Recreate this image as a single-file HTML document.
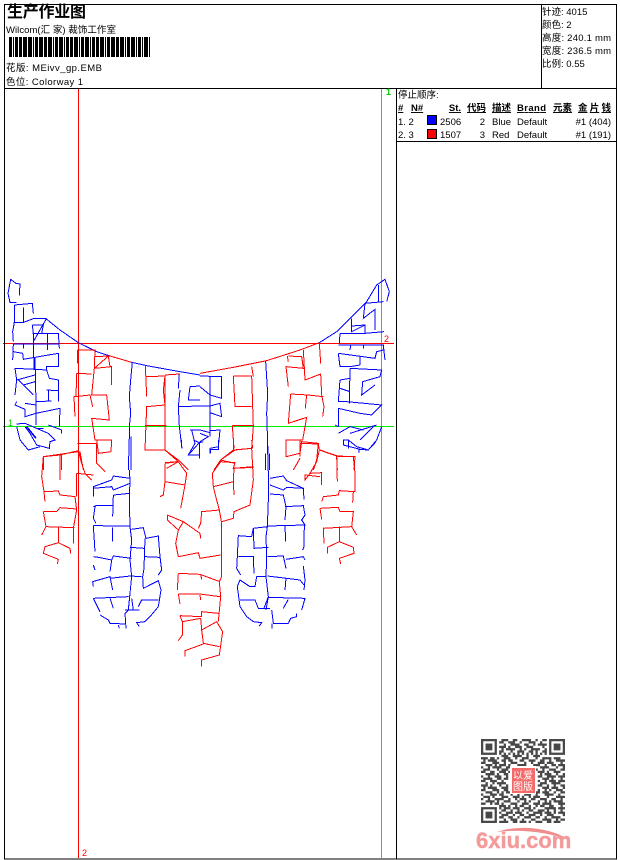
<!DOCTYPE html>
<html><head><meta charset="utf-8"><style>
html,body{margin:0;padding:0;background:#fff;width:620px;height:860px;overflow:hidden}
svg{display:block}
text{font-family:"Liberation Sans","Noto Sans CJK SC",sans-serif;font-size:9.5px;fill:#000}
.s path{fill:none;stroke-width:3;stroke-linejoin:miter}
.b{stroke:#0000ff}.r{stroke:#ff0000}
.h{font-weight:bold;text-decoration:underline}
</style></head><body>
<svg width="620" height="860" viewBox="0 0 620 860" xmlns="http://www.w3.org/2000/svg">
<rect width="620" height="860" fill="#fff"/>
<g shape-rendering="crispEdges">
<path d="M78.5 88V858" stroke="#f00" fill="none"/>
<path d="M381.5 88V858" stroke="#00ee00" fill="none"/>
<path d="M3 343.5H394" stroke="#f00" fill="none"/>
<path d="M3 426.5H394" stroke="#00ee00" fill="none"/>

<g class="s" transform="translate(0,270) scale(.33333)">
<path class="b" d="M32,28 24,70 30,97 50,97M32,28 48,40 60,42 58,76M43,105 97,100 100,130M43,105 43,158 38,185 40,215M70,112 70,158M40,158 68,158 100,146 138,146 180,180 235,218 290,245 330,258 395,277 440,287 540,305 600,315M97,165 130,165 125,190M138,148 100,215M97,165 100,190M97,190 175,190 178,235M143,190 143,240M100,190 102,300M40,222 178,222M40,222 38,270M70,222 70,235M40,245 68,250 70,268 105,262 145,255 175,250 175,290 140,290 140,300 105,298 45,295 50,330 45,375M105,262 108,400 108,465M50,330 105,315M55,330 100,375M70,345 105,335M140,300 148,325 175,330 175,395M140,360 175,362M145,362 145,395M108,395 155,393M50,395 45,405 75,418 75,440 108,430 180,415 178,470M75,400 108,405M50,462 75,460 110,475 145,490 165,510 150,515 148,535 110,525 90,490 75,470M50,470 60,510 85,540 120,530M145,465 185,480 185,490M110,475 130,475M397,277 392,330 388,380 392,430 388,470 388,500 385,600M393,500 393,600M538,310 535,355M540,360 535,410 600,408M570,350 600,348M570,350 565,390 600,390M535,410 538,470 546,535M570,480 600,480M575,480 585,520 565,555 600,555"/>
<path class="b" style="stroke-width:5" d="M80,470 108,505"/>
<path class="r" d="M233,240 285,240 283,295 335,290 335,345M232,240 233,280M285,260 325,258 283,295M325,258 330,290M283,295 275,375 320,375 328,450 275,445 285,510 335,510 333,545 295,550 290,510M230,310 275,312M230,310 228,380 222,380 225,440M225,380 270,375 278,410M330,258 395,277M436,287 440,380M440,320 495,318 490,360 495,405 440,410 435,540 495,540 495,320M495,315 540,312M435,467 500,467M495,540 535,570 565,600M495,578 530,575M232,520 290,520 290,550M235,520 235,545 130,560 130,600M185,555 185,600M240,545 250,600"/>
</g>

<g class="s" transform="translate(200,270) scale(.33333)">
<path class="b" d="M0,310 100,292 200,272 300,240 358,218 410,185 450,145 500,95 530,45 555,28 568,65 560,95M197,275 203,370 200,430 204,550 M197,550 197,600M208,550 208,600M535,45 535,95M495,100 550,95M495,100 490,145 525,118 525,180M455,145 455,185 495,165 495,190M420,190 495,190 552,185M455,168 495,165M420,190 418,222M415,225 550,225 555,270M452,225 450,240M490,225 490,235M415,250 420,290 450,290 480,285M415,250 525,265 530,245 550,240M480,260 480,285M450,295 545,300 540,320 488,335 485,375 525,345M420,330 450,325M450,295 448,400M420,330 415,395 440,395 545,405 515,435 480,430 415,415 415,470M420,355 450,365M405,465 415,470M415,490 450,470 490,480M430,520 430,510 445,510 470,530 505,540 530,510 545,470M450,490 530,465M480,510 520,470M0,318 65,320 65,385 30,375 0,350M30,318 30,500M0,408 30,408 60,400 65,440 30,428M0,480 30,488M30,482 60,480 55,530 30,535 30,550M0,490 25,500 0,515"/>
<path class="r" d="M0,310 100,292 200,272 300,240 358,218M100,318 155,318 160,470 155,535 105,540 62,570 42,600M100,318 105,410 155,410M97,467 160,467M97,467 102,535M62,575 105,578 100,595 160,592M155,290 160,320M265,258 305,260 310,295 258,290 265,350M310,240 315,330 362,312 365,375 372,410 368,440M358,218 362,280M272,372 325,375 370,380M272,372 265,460 320,442 308,510 258,510 258,560 300,550 305,515 355,520 350,570 340,600M262,258 265,275M320,375 316,415M360,540 410,557 412,600M412,560 465,560 462,600M300,565 280,600"/>
</g>

<g class="s" transform="translate(30,440) scale(.33333)">
<path class="b" d="M298,90 300,120 298,180 300,260 305,300 300,360 305,410 300,460 295,510 285,520 288,565M190,170 190,140 245,120 250,108 300,115M190,145 245,140 250,150 300,130M250,165 300,160M250,165 248,230M190,200 198,197 248,197M195,200 190,235 198,250M190,257 300,258M190,257 195,335M248,262 248,305M305,268 340,263 348,295 385,288 390,350 395,390 385,405M345,295 342,385 338,410 340,445 385,422 393,450 385,500M385,480 335,480 325,500M300,322 342,325M345,350 388,352M190,350 205,352 245,360 250,348 305,355M245,360 240,395M190,375 195,390M190,440 188,425 240,410 248,450M240,415 300,408 335,410M190,475 295,470M190,475 210,515M210,525 235,540 240,550 285,552M240,475 250,505M305,475 310,510 285,510M328,510 310,510M385,500 360,530 345,545 320,548 328,560M265,555 268,565"/>
<path class="r" d="M40,50 90,45 145,32M40,50 35,110 42,155 85,153 90,165 135,170 140,210 130,265 130,310M42,155 45,185M90,45 90,120M40,215 80,215 90,203 140,207M40,215 48,260 35,285M48,260 133,263M85,263 85,308 120,325 122,340M85,308 45,320 40,340 85,358 82,372M145,30 155,70 165,100 185,120M140,100 190,105M140,100 140,170M200,40 200,70 225,95"/>
</g>

<g class="s" transform="translate(160,440) scale(.33333)">
<path class="r" d="M0,30 15,30 55,65 80,100 75,135 62,205M15,70 55,65 20,85M15,70 15,125 10,165 0,170M15,125 75,135M182,60 220,30 275,25 280,120 270,195 222,215 220,235 185,245M182,60 225,70M182,65 157,100 160,140 170,180 178,210 125,215 122,250 115,265M178,210 185,250 185,410 178,425 182,470 175,545M160,140 220,125 222,165M220,0 220,30M220,85 280,80M222,85 220,125M275,0 278,25M22,225 70,245 120,280 122,295M22,225 22,240 55,270 47,310 55,350 115,338 120,355 182,345M70,245 55,270M55,400 120,403 180,425M122,403 125,418M55,400 52,450M55,462 120,462 180,470M120,465 122,480M55,462 60,492M60,527 125,530 125,515 175,520M60,527 67,545 122,535 125,570 170,545 188,575 178,645 125,660 125,680M67,545 67,585 55,602M125,570 130,610 178,620M130,612 75,632 75,650"/>
<path class="b" d="M322,0 325,100 325,180 322,260 318,290 320,350 318,410 325,470 318,510M330,115 370,108 380,122 430,145 432,178M330,135 370,150 380,142 430,145M330,162 370,165 378,200 375,240M375,200 430,197 435,225 425,240 435,255 322,258M375,258 377,305M433,255 432,320 428,330M322,350 370,348 378,385M378,358 430,350 435,360M430,378 435,420 432,450M322,408 380,415 420,420 432,435M378,415 375,450M322,472 435,475 425,510M385,478 370,505M335,510 340,550 385,550 392,535 410,530 410,520M336,550 336,565M322,260 280,265 275,290 235,287 232,350 230,385 242,405M280,265 282,325 325,322M235,350 280,350 282,400M290,410 320,410M290,410 285,440 270,440 240,420 232,440 240,500 260,530 280,545 305,548 298,558M240,480 285,480 295,505 330,505M325,470 312,505M65,0 65,22M85,45 118,8 118,55M85,45 118,45M100,0 118,8 130,5M152,40 152,28 175,28 175,0"/>
</g>

<g class="s" transform="translate(300,440) scale(.33333)">
<path class="r" d="M0,10 55,12 58,30 110,48 160,50 165,100 165,155 118,152 115,165 70,170 65,185M58,30 50,65 30,100 65,98 65,135M30,100 15,120 15,105 60,110M110,48 112,125M160,155 158,188M60,205 115,202 120,215 160,215 155,260 170,285M60,205 65,238M70,262 72,310M70,265 155,260M118,260 118,305 82,322 82,340M118,305 160,322 162,340 118,355 122,372M0,0 0,50"/>
<path class="b" d="M130,0 130,15 180,28 205,30 228,5M145,0 145,25M178,28 176,38"/>
</g>

<!-- frame -->
<g fill="none" stroke="#000">
<rect x="4.5" y="4.5" width="612" height="854.5"/>
<path d="M4 88.5H617M541.5 4V88M396.5 88V859M396 141.5H617"/>
</g>

<!-- barcode -->
<path fill="none" stroke="#000" stroke-width="3" d="M10.5 37v20M16.5 37v20M20.5 37v20M25.5 37v20M30.5 37v20M36.5 37v20M41.5 37v20M45.5 37v20M50.5 37v20M56.5 37v20M61.5 37v20M67.5 37v20M71.5 37v20M76.5 37v20M82.5 37v20M87.5 37v20M93.5 37v20M97.5 37v20M102.5 37v20M108.5 37v20M113.5 37v20M117.5 37v20M122.5 37v20M128.5 37v20M133.5 37v20M139.5 37v20M146.5 37v20"/>
<path fill="none" stroke="#000" stroke-width="1" d="M13.5 37v20M23.5 37v20M28.5 37v20M33.5 37v20M39.5 37v20M48.5 37v20M53.5 37v20M59.5 37v20M64.5 37v20M74.5 37v20M79.5 37v20M85.5 37v20M90.5 37v20M100.5 37v20M105.5 37v20M111.5 37v20M120.5 37v20M125.5 37v20M131.5 37v20M136.5 37v20M142.5 37v20M144.5 37v20M149.5 37v20"/>

<!-- swatches -->
<rect x="427.5" y="115.5" width="9" height="9" fill="#00f" stroke="#000"/>
<rect x="427.5" y="129.5" width="9" height="9" fill="#f00" stroke="#000"/>
</g>

<!-- labels -->
<text x="386" y="95" style="fill:#00d000;font-weight:bold;font-size:9px">1</text>
<text x="8" y="426" style="fill:#00d000;font-size:9px">1</text>
<text x="384" y="342" style="fill:#f00;font-size:9px">2</text>
<text x="82" y="856" style="fill:#f00;font-size:9px">2</text>

<!-- header -->
<text x="7" y="17" textLength="79" lengthAdjust="spacing" style="font-size:16px;font-weight:bold">生产作业图</text>
<text x="6" y="33" textLength="110" lengthAdjust="spacing">Wilcom(汇 家) 裁饰工作室</text>
<text x="6" y="71" textLength="96" lengthAdjust="spacing">花版:  MEivv_gp.EMB</text>
<text x="6" y="85" textLength="77" lengthAdjust="spacing">色位:  Colorway 1</text>
<text x="542" y="15">针迹: 4015</text>
<text x="542" y="28">颜色: 2</text>
<text x="542" y="41" textLength="69" lengthAdjust="spacing">高度: 240.1 mm</text>
<text x="542" y="54" textLength="69" lengthAdjust="spacing">宽度: 236.5 mm</text>
<text x="542" y="67">比例: 0.55</text>

<!-- table -->
<text x="398" y="98">停止顺序:</text>
<text x="398" y="111" class="h">#</text>
<text x="411" y="111" class="h">N#</text>
<text x="461" y="111" class="h" text-anchor="end">St.</text>
<text x="486" y="111" class="h" text-anchor="end">代码</text>
<text x="492" y="111" class="h">描述</text>
<text x="517" y="111" class="h" textLength="29" lengthAdjust="spacing">Brand</text>
<text x="553" y="111" class="h">元素</text>
<text x="578" y="111" class="h" textLength="33" lengthAdjust="spacing">金片钱</text>
<text x="398" y="125">1. 2</text>
<text x="440" y="125">2506</text>
<text x="485" y="125" text-anchor="end">2</text>
<text x="492" y="125">Blue</text>
<text x="517" y="125">Default</text>
<text x="611" y="125" text-anchor="end">#1 (404)</text>
<text x="398" y="138">2. 3</text>
<text x="440" y="138">1507</text>
<text x="485" y="138" text-anchor="end">3</text>
<text x="492" y="138">Red</text>
<text x="517" y="138">Default</text>
<text x="611" y="138" text-anchor="end">#1 (191)</text>

<!-- QR -->
<g transform="translate(481,739) scale(2.27)" fill="none" stroke="#484848" stroke-width="1">
<rect x=".5" y=".5" width="6" height="6"/><rect x="2" y="2" width="3" height="3" fill="#484848" stroke="none"/>
<rect x="30.5" y=".5" width="6" height="6"/><rect x="32" y="2" width="3" height="3" fill="#484848" stroke="none"/>
<rect x=".5" y="30.5" width="6" height="6"/><rect x="2" y="32" width="3" height="3" fill="#484848" stroke="none"/>
<path d="M9 .5h3M14 .5h2M18 .5h4M24 .5h1M27 .5h2M8 1.5h2M12 1.5h3M17 1.5h1M21 1.5h3M26 1.5h1M10 2.5h1M13 2.5h4M19 2.5h2M23 2.5h1M25 2.5h4M8 3.5h3M12 3.5h1M15 3.5h3M20 3.5h3M27 3.5h1M9 4.5h1M11 4.5h4M17 4.5h1M19 4.5h1M22 4.5h4M28 4.5h1M8 5.5h2M13 5.5h1M16 5.5h3M21 5.5h2M24 5.5h1M27 5.5h2M8 6.5h1M10 6.5h1M12 6.5h1M14 6.5h1M16 6.5h1M18 6.5h1M20 6.5h1M22 6.5h1M24 6.5h1M26 6.5h1M28 6.5h1M9 7.5h3M14 7.5h4M20 7.5h1M23 7.5h3M0 8.5h3M4 8.5h2M7 8.5h1M10 8.5h3M15 8.5h1M18 8.5h3M24 8.5h1M27 8.5h4M32 8.5h3M1 9.5h1M3 9.5h4M9 9.5h2M12 9.5h2M17 9.5h2M21 9.5h3M26 9.5h2M30 9.5h1M33 9.5h4M0 10.5h2M5 10.5h3M10 10.5h1M13 10.5h3M19 10.5h1M22 10.5h1M25 10.5h3M29 10.5h3M35 10.5h1M2 11.5h3M6 11.5h1M8 11.5h3M12 11.5h1M16 11.5h4M23 11.5h3M28 11.5h1M31 11.5h2M34 11.5h3M0 12.5h1M3 12.5h1M5 12.5h4M11 12.5h2M15 12.5h1M18 12.5h2M21 12.5h3M26 12.5h4M33 12.5h1M36 12.5h1M1 13.5h3M7 13.5h1M9 13.5h3M14 13.5h3M20 13.5h1M24 13.5h1M27 13.5h1M30 13.5h3M35 13.5h2M0 14.5h2M4 14.5h2M8 14.5h3M12 14.5h1M25 14.5h3M29 14.5h1M32 14.5h3M2 15.5h4M7 15.5h1M10 15.5h2M26 15.5h1M28 15.5h3M33 15.5h1M36 15.5h1M0 16.5h1M3 16.5h1M6 16.5h3M11 16.5h1M25 16.5h2M29 16.5h4M34 16.5h3M1 17.5h4M7 17.5h2M10 17.5h2M27 17.5h3M31 17.5h1M35 17.5h1M0 18.5h2M4 18.5h3M9 18.5h1M25 18.5h1M28 18.5h1M30 18.5h3M34 18.5h3M2 19.5h1M5 19.5h1M7 19.5h4M26 19.5h3M31 19.5h4M0 20.5h3M4 20.5h1M8 20.5h1M11 20.5h1M25 20.5h2M29 20.5h1M32 20.5h1M35 20.5h2M1 21.5h1M3 21.5h4M9 21.5h3M27 21.5h3M31 21.5h3M36 21.5h1M0 22.5h2M5 22.5h3M10 22.5h2M25 22.5h1M28 22.5h1M30 22.5h1M33 22.5h3M2 23.5h3M7 23.5h1M9 23.5h1M11 23.5h4M17 23.5h3M22 23.5h4M27 23.5h3M32 23.5h1M35 23.5h2M0 24.5h1M4 24.5h3M8 24.5h2M13 24.5h1M16 24.5h1M19 24.5h3M24 24.5h1M28 24.5h4M34 24.5h1M1 25.5h3M5 25.5h1M9 25.5h3M14 25.5h3M18 25.5h1M21 25.5h1M23 25.5h3M29 25.5h1M33 25.5h4M0 26.5h1M3 26.5h1M6 26.5h4M12 26.5h1M15 26.5h1M17 26.5h3M22 26.5h2M26 26.5h3M31 26.5h2M35 26.5h1M2 27.5h4M7 27.5h1M10 27.5h3M16 27.5h1M19 27.5h1M21 27.5h1M25 27.5h1M28 27.5h1M30 27.5h1M32 27.5h4M0 28.5h2M4 28.5h1M6 28.5h2M9 28.5h1M13 28.5h3M18 28.5h3M23 28.5h3M27 28.5h4M34 28.5h3M8 29.5h3M12 29.5h1M15 29.5h1M17 29.5h2M21 29.5h1M24 29.5h1M26 29.5h2M30 29.5h2M35 29.5h1M8 30.5h1M10 30.5h3M14 30.5h3M19 30.5h3M23 30.5h1M28 30.5h5M34 30.5h3M9 31.5h2M13 31.5h1M16 31.5h1M18 31.5h1M21 31.5h2M25 31.5h3M29 31.5h1M32 31.5h1M35 31.5h1M8 32.5h1M11 32.5h3M15 32.5h3M20 32.5h1M23 32.5h4M28 32.5h3M32 32.5h1M34 32.5h3M9 33.5h3M14 33.5h1M17 33.5h2M21 33.5h3M26 33.5h1M29 33.5h3M36 33.5h1M8 34.5h2M12 34.5h2M16 34.5h1M19 34.5h3M24 34.5h2M28 34.5h1M31 34.5h4M10 35.5h1M13 35.5h3M18 35.5h1M22 35.5h2M27 35.5h4M33 35.5h1M35 35.5h2M8 36.5h4M14 36.5h2M17 36.5h3M21 36.5h1M24 36.5h3M29 36.5h2M32 36.5h3"/>
</g>
<rect x="510" y="766" width="26" height="28" fill="#fff"/>
<rect x="512" y="768" width="23" height="25" fill="#f46a6a"/>
<text x="513" y="779" style="font-size:10px;fill:#fff">以</text>
<text x="523" y="779" style="font-size:10px;fill:#fff">爱</text>
<text x="513" y="790" style="font-size:10px;fill:#fff">图</text>
<text x="523" y="790" style="font-size:10px;fill:#fff">版</text>

<!-- 6xiu logo -->
<path d="M497 832C515 825 550 826 571 841C550 832 520 829 497 832Z" fill="#f08c8c"/>
<text x="476" y="848" style="font-size:22px;font-weight:bold;fill:#f49a9a;stroke:#f49a9a;stroke-width:.4">6xiu.com</text>
</svg>
</body></html>
